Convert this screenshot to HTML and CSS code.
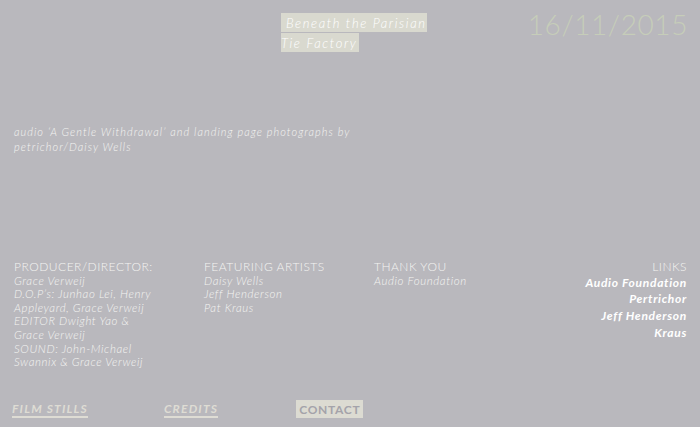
FILE: index.html
```html
<!DOCTYPE html>
<html>
<head>
<meta charset="utf-8">
<link rel="stylesheet" href="styles.css">
</head>
<body>
<div class="page">
  <header class="top">
    <h1 class="title"><span class="hl">&nbsp;Beneath the Parisian Tie Factory</span></h1>
    <div class="date">16/11/2015</div>
  </header>
  <p class="photo-credit">audio ‘A Gentle Withdrawal’ and landing page photographs by<br>petrichor/Daisy Wells</p>
  <section class="cols">
    <div class="col col-prod">
      <div class="head">PRODUCER/DIRECTOR:</div>
      <div>Grace Verweij</div>
      <div>D.O.P’s: Junhao Lei, Henry Appleyard, Grace Verweij</div>
      <div>EDITOR Dwight Yao &amp; Grace Verweij</div>
      <div>SOUND: John-Michael Swannix &amp; Grace Verweij</div>
    </div>
    <div class="col col-feat">
      <div class="head">FEATURING ARTISTS</div>
      <div>Daisy Wells</div>
      <div>Jeff Henderson</div>
      <div>Pat Kraus</div>
    </div>
    <div class="col col-thanks">
      <div class="head">THANK YOU</div>
      <div>Audio Foundation</div>
    </div>
    <div class="col col-links">
      <div class="head">LINKS</div>
      <a href="#">Audio Foundation</a>
      <a href="#">Pertrichor</a>
      <a href="#">Jeff Henderson</a>
      <a href="#">Kraus</a>
    </div>
  </section>
  <nav class="nav">
    <a class="nav-link nav-stills" href="#">FILM STILLS</a>
    <a class="nav-link nav-credits" href="#">CREDITS</a>
    <a class="nav-link nav-contact" href="#">CONTACT</a>
  </nav>
</div>
</body>
</html>
```
FILE: styles.css
```css
html, body {
  margin: 0;
  padding: 0;
  background: #b9b8bd;
}
body {
  font-family: Lato, "Open Sans", sans-serif;
  color: #f4f4f2;
  width: 700px;
  height: 427px;
  overflow: hidden;
}
.page {
  display: flex;
  flex-direction: column;
  height: 427px;
}
.top {
  display: flex;
  align-items: flex-start;
  padding: 0 12px 0 281px;
}
.title {
  margin: 13px 0 0 0;
  width: 150px;
  font-size: 13px;
  font-weight: 300;
  font-style: italic;
  letter-spacing: 1.6px;
  line-height: 20px;
  flex: none;
}
.hl {
  background: #d9d9cf;
  padding: 2px 2px 1px 0;
  color: #ffffff;
}
.date {
  margin: 9px 0 0 auto;
  font-size: 28px;
  font-weight: 300;
  color: #c6cdb9;
  letter-spacing: 0.6px;
  line-height: 30px;
}
.photo-credit {
  margin: 71px 0 0 14px;
  font-size: 11px;
  font-style: italic;
  font-weight: 300;
  letter-spacing: 1.05px;
  line-height: 15px;
}
.cols {
  display: flex;
  margin-top: 106px;
  padding: 0 13px 0 14px;
  font-size: 11.5px;
  line-height: 13.6px;
  letter-spacing: 0.6px;
}
.col div, .col a {
  font-style: italic;
  font-weight: 300;
}
.col .head {
  font-style: normal;
  font-size: 12px;
  letter-spacing: 0.5px;
}
.col-prod { width: 146px; margin-right: 44px; }
.col-feat { width: 140px; margin-right: 30px; }
.col-thanks { width: 150px; }
.col-links {
  margin-left: auto;
  display: flex;
  flex-direction: column;
  align-items: flex-end;
  text-align: right;
}
.col-links .head { margin-bottom: 1px; }
.col-links a {
  color: #ffffff;
  text-decoration: none;
  font-size: 12px;
  font-weight: 700;
  font-style: italic;
  letter-spacing: 0.7px;
  line-height: 16.7px;
}
.nav {
  margin-top: auto;
  display: flex;
  align-items: center;
  padding: 0 0 9px 12px;
}
.nav-link {
  font-size: 12px;
  font-weight: 700;
  letter-spacing: 1.2px;
  text-decoration: none;
}
.nav-stills, .nav-credits {
  color: #dedcd4;
  font-style: italic;
  border-bottom: 2px solid #dedcd4;
  padding-bottom: 0;
}
.nav-stills { margin-right: 76px; }
.nav-credits { margin-right: 78px; }
.nav-contact {
  background: #dcdbd2;
  color: #a4a3aa;
  letter-spacing: 0.7px;
  padding: 2px 3px 1px 3px;
}
```
